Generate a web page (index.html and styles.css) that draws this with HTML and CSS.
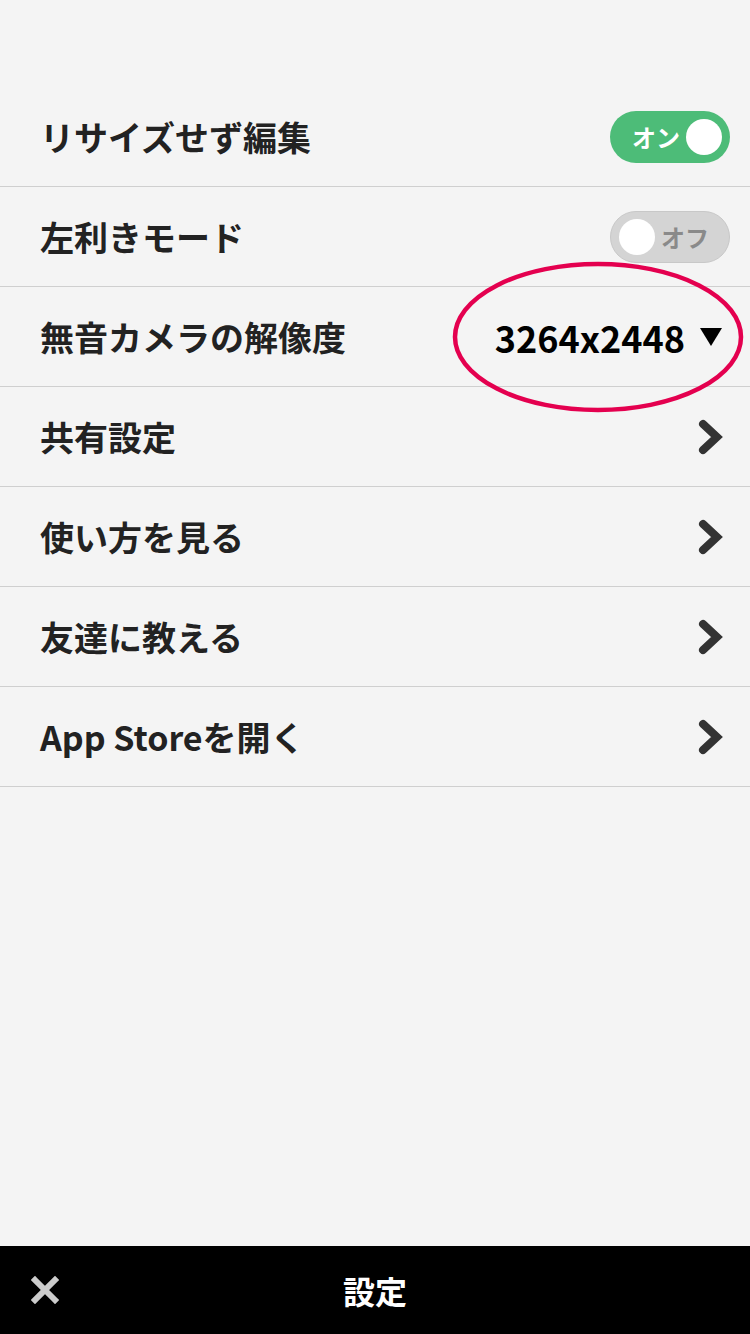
FILE: index.html
```html
<!DOCTYPE html>
<html lang="ja">
<head>
    <meta charset="UTF-8">
    <meta name="viewport" content="width=device-width, initial-scale=1.0">
    <title>設定</title>
    <link rel="stylesheet" href="styles.css">
</head>
<body>
    <div class="page">
        <ul class="settings">
            <li class="row">
                <span class="label">リサイズせず編集</span>
                <div class="toggle on"><span class="toggle-text">オン</span><span class="knob"></span></div>
            </li>
            <li class="row">
                <span class="label">左利きモード</span>
                <div class="toggle off"><span class="knob"></span><span class="toggle-text">オフ</span></div>
            </li>
            <li class="row">
                <span class="label">無音カメラの解像度</span>
                <div class="select">
                    <span class="select-value">3264x2448</span>
                    <svg class="caret" width="22" height="18" viewBox="0 0 22 18"><path d="M0 0 H22 L11 18 Z" fill="#000"/></svg>
                    <svg class="circle" width="296" height="156" viewBox="0 0 296 156"><ellipse cx="148" cy="78" rx="143" ry="73" fill="none" stroke="#e4004f" stroke-width="4.5"/></svg>
                </div>
            </li>
            <li class="row">
                <span class="label">共有設定</span>
                <svg class="chevron" width="26" height="36" viewBox="0 0 26 36"><path d="M5 5 L19 18 L5 31" fill="none" stroke="#333" stroke-width="8" stroke-linejoin="miter" stroke-linecap="round"/></svg>
            </li>
            <li class="row">
                <span class="label">使い方を見る</span>
                <svg class="chevron" width="26" height="36" viewBox="0 0 26 36"><path d="M5 5 L19 18 L5 31" fill="none" stroke="#333" stroke-width="8" stroke-linejoin="miter" stroke-linecap="round"/></svg>
            </li>
            <li class="row">
                <span class="label">友達に教える</span>
                <svg class="chevron" width="26" height="36" viewBox="0 0 26 36"><path d="M5 5 L19 18 L5 31" fill="none" stroke="#333" stroke-width="8" stroke-linejoin="miter" stroke-linecap="round"/></svg>
            </li>
            <li class="row">
                <span class="label">App Storeを開く</span>
                <svg class="chevron" width="26" height="36" viewBox="0 0 26 36"><path d="M5 5 L19 18 L5 31" fill="none" stroke="#333" stroke-width="8" stroke-linejoin="miter" stroke-linecap="round"/></svg>
            </li>
        </ul>
    </div>

    <div class="bottom-bar">
        <svg class="close" width="28" height="28" viewBox="0 0 28 28"><path d="M4 4 L24 24 M24 4 L4 24" stroke="#ccc" stroke-width="6" stroke-linecap="square"/></svg>
        <span class="title">設定</span>
    </div>
</body>
</html>
```

FILE: styles.css
```css
* {
    box-sizing: border-box;
}
body {
    margin: 0;
    background-color: #f4f4f4;
    font-family: "Noto Sans CJK JP", "Noto Sans", sans-serif;
    color: #222;
    width: 750px;
    height: 1334px;
    display: flex;
    flex-direction: column;
}
.page {
    flex: 1;
    padding-top: 87px;
}
.settings {
    list-style: none;
    margin: 0;
    padding: 0;
}
.row {
    height: 100px;
    border-bottom: 1px solid #cfcfcf;
    display: flex;
    align-items: center;
    justify-content: space-between;
    padding: 0 20px 0 40px;
}
.label {
    font-size: 34px;
    font-weight: bold;
}
.toggle {
    width: 120px;
    height: 52px;
    border-radius: 26px;
    display: flex;
    align-items: center;
    padding: 0 8px;
    gap: 6px;
}
.toggle.on {
    background-color: #4dbc78;
    justify-content: flex-end;
}
.toggle.off {
    background-color: #d4d4d4;
    border: 1px solid #c8c8c8;
    justify-content: flex-start;
}
.knob {
    width: 36px;
    height: 36px;
    border-radius: 50%;
    background-color: #fff;
}
.toggle-text {
    font-size: 24px;
    font-weight: bold;
    color: #fff;
}
.toggle.off .toggle-text {
    color: #8a8a8a;
}
.select {
    position: relative;
    display: flex;
    align-items: center;
    gap: 15px;
    padding-right: 8px;
}
.select-value {
    font-size: 36px;
    font-weight: bold;
    color: #000;
}
.circle {
    position: absolute;
    right: -16px;
    top: 50%;
    margin-top: -78px;
}
.chevron {
    margin-right: 6px;
}
.bottom-bar {
    height: 88px;
    background-color: #000;
    position: relative;
    display: flex;
    align-items: center;
    justify-content: center;
}
.close {
    position: absolute;
    left: 31px;
    top: 30px;
}
.title {
    color: #fff;
    font-size: 32px;
    font-weight: bold;
}
```
